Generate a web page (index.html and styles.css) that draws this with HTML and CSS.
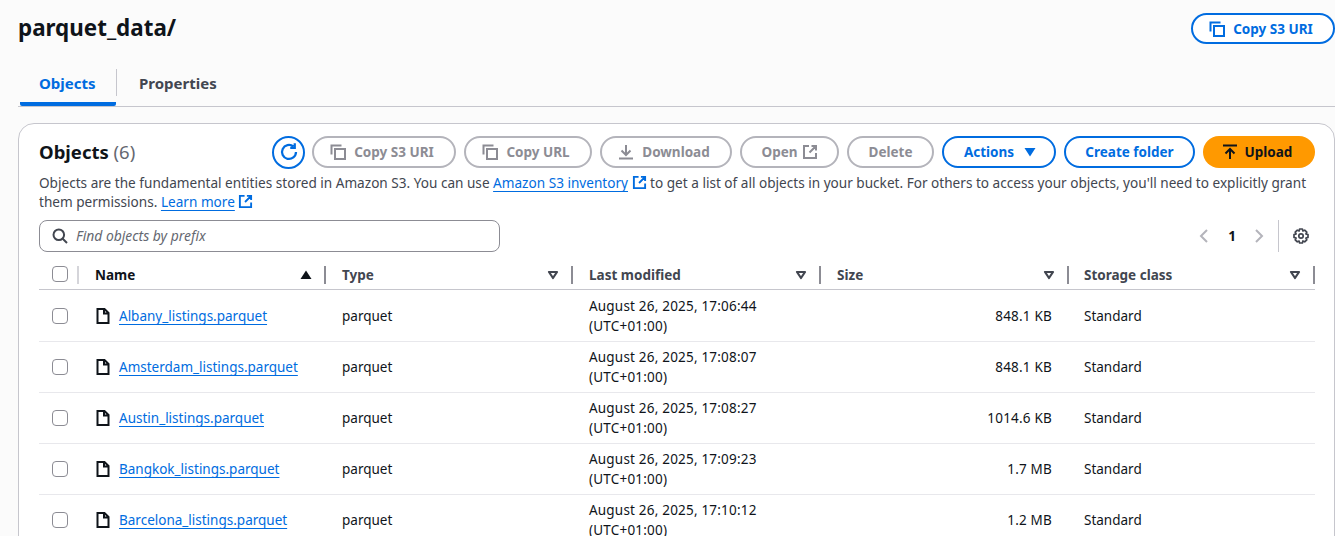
FILE: index.html
```html
<!DOCTYPE html>
<html lang="en">
<head>
    <meta charset="UTF-8">
    <title>parquet_data/ - S3 bucket</title>
    <link rel="stylesheet" href="styles.css">
</head>
<body>
    <svg class="defs" width="0" height="0">
        <symbol id="copy" viewBox="0 0 16 16"><path d="M1.5 10.5V1.5H11.5M5 5H15V15H5Z" fill="none" stroke="currentColor" stroke-width="2"/></symbol>
        <symbol id="external" viewBox="0 0 16 16"><path d="M7 2H2V14H14V9M9.5 2H14V6.5M14 2L7.5 8.5" fill="none" stroke="currentColor" stroke-width="2"/></symbol>
        <symbol id="file" viewBox="0 0 16 16"><path d="M2.5 1H9.5L13.5 5V15H2.5ZM9 1V5.5H13.5" fill="none" stroke="currentColor" stroke-width="2"/></symbol>
        <symbol id="caret" viewBox="0 0 12 10"><path d="M2 2H10L6 8Z" fill="none" stroke="currentColor" stroke-width="2.2" stroke-linejoin="round"/></symbol>
    </svg>

    <header class="page-head">
        <h1>parquet_data/</h1>
        <button class="btn btn-primary-line has-icon"><svg class="icon"><use href="#copy"/></svg>Copy S3 URI</button>
    </header>

    <nav class="tabs">
        <a class="tab active">Objects</a>
        <a class="tab">Properties</a>
    </nav>

    <section class="card">
        <div class="card-head">
            <h2>Objects <span class="count">(6)</span></h2>
            <div class="actions">
                <button class="btn-round">
                    <svg width="20" height="20" viewBox="0 0 16 16"><path d="M13.6 8A5.6 5.6 0 1 1 11.5 3.6M12.6 1V4.6H9" fill="none" stroke="currentColor" stroke-width="1.8"/></svg>
                </button>
                <button class="btn btn-off has-icon w-144"><svg class="icon"><use href="#copy"/></svg>Copy S3 URI</button>
                <button class="btn btn-off has-icon w-128"><svg class="icon"><use href="#copy"/></svg>Copy URL</button>
                <button class="btn btn-off has-icon w-132">
                    <svg class="icon" viewBox="0 0 16 16"><path d="M8 1V10.5M3.5 6.5L8 11L12.5 6.5M1 14.5H15" fill="none" stroke="currentColor" stroke-width="2"/></svg>Download
                </button>
                <button class="btn btn-off w-99 icon-end">Open<svg class="icon"><use href="#external"/></svg></button>
                <button class="btn btn-off w-87">Delete</button>
                <button class="btn btn-primary-line w-114">Actions
                    <svg class="tri" viewBox="0 0 12 10"><path d="M0.5 1H11.5L6 9.5Z" fill="currentColor"/></svg>
                </button>
                <button class="btn btn-primary-line w-131">Create folder</button>
                <button class="btn btn-upload">
                    <svg class="icon" viewBox="0 0 16 16"><path d="M1 1.5H15M8 15V5.5M3.5 9.5L8 5L12.5 9.5" fill="none" stroke="currentColor" stroke-width="2"/></svg>Upload
                </button>
            </div>
        </div>
        <p class="desc">Objects are the fundamental entities stored in Amazon S3. You can use <a href="#">Amazon S3 inventory</a> <svg class="icon-link"><use href="#external"/></svg> to get a list of all objects in your bucket. For others to access your objects, you'll need to explicitly grant<br>them permissions. <a href="#">Learn more</a> <svg class="icon-link"><use href="#external"/></svg></p>

        <div class="tools">
            <div class="search">
                <svg width="16" height="16" viewBox="0 0 16 16"><circle cx="6.8" cy="6.8" r="5.3" fill="none" stroke="currentColor" stroke-width="2"/><path d="M10.5 10.5L15 15" stroke="currentColor" stroke-width="2"/></svg>
                <span>Find objects by prefix</span>
            </div>
            <div class="pager">
                <svg class="chev" viewBox="0 0 10 16"><path d="M8 2L2 8L8 14" fill="none" stroke="currentColor" stroke-width="2"/></svg>
                <b>1</b>
                <svg class="chev" viewBox="0 0 10 16"><path d="M2 2L8 8L2 14" fill="none" stroke="currentColor" stroke-width="2"/></svg>
                <span class="pager-sep"></span>
                <svg class="gear" width="16" height="16" viewBox="0 0 16 16"><path d="M6.6 1H9.4L9.9 3L11.7 2.2L13.8 4.2L12.9 6L15 6.6V9.4L12.9 10L13.8 11.8L11.7 13.8L9.9 13L9.4 15H6.6L6.1 13L4.3 13.8L2.2 11.8L3.1 10L1 9.4V6.6L3.1 6L2.2 4.2L4.3 2.2L6.1 3Z" fill="none" stroke="currentColor" stroke-width="1.7" stroke-linejoin="round"/><circle cx="8" cy="8" r="2.2" fill="none" stroke="currentColor" stroke-width="1.7"/></svg>
            </div>
        </div>

        <div class="row row-head">
            <div class="cell-check"><span class="check"></span></div>
            <div class="th th-name">Name <svg class="sort" viewBox="0 0 12 10"><path d="M6 0.5L11.5 9H0.5Z" fill="currentColor"/></svg></div>
            <div class="th">Type <svg class="sort"><use href="#caret"/></svg></div>
            <div class="th">Last modified <svg class="sort"><use href="#caret"/></svg></div>
            <div class="th">Size <svg class="sort"><use href="#caret"/></svg></div>
            <div class="th th-last">Storage class <svg class="sort"><use href="#caret"/></svg></div>
        </div>

        <div class="row">
            <div class="cell-check"><span class="check"></span></div>
            <div class="td td-name"><svg class="file"><use href="#file"/></svg><a href="#">Albany_listings.parquet</a></div>
            <div class="td">parquet</div>
            <div class="td td-num">August 26, 2025, 17:06:44<br>(UTC+01:00)</div>
            <div class="td td-num td-size">848.1 KB</div>
            <div class="td td-last">Standard</div>
        </div>
        <div class="row">
            <div class="cell-check"><span class="check"></span></div>
            <div class="td td-name"><svg class="file"><use href="#file"/></svg><a href="#">Amsterdam_listings.parquet</a></div>
            <div class="td">parquet</div>
            <div class="td td-num">August 26, 2025, 17:08:07<br>(UTC+01:00)</div>
            <div class="td td-num td-size">848.1 KB</div>
            <div class="td td-last">Standard</div>
        </div>
        <div class="row">
            <div class="cell-check"><span class="check"></span></div>
            <div class="td td-name"><svg class="file"><use href="#file"/></svg><a href="#">Austin_listings.parquet</a></div>
            <div class="td">parquet</div>
            <div class="td td-num">August 26, 2025, 17:08:27<br>(UTC+01:00)</div>
            <div class="td td-num td-size">1014.6 KB</div>
            <div class="td td-last">Standard</div>
        </div>
        <div class="row">
            <div class="cell-check"><span class="check"></span></div>
            <div class="td td-name"><svg class="file"><use href="#file"/></svg><a href="#">Bangkok_listings.parquet</a></div>
            <div class="td">parquet</div>
            <div class="td td-num">August 26, 2025, 17:09:23<br>(UTC+01:00)</div>
            <div class="td td-num td-size">1.7 MB</div>
            <div class="td td-last">Standard</div>
        </div>
        <div class="row">
            <div class="cell-check"><span class="check"></span></div>
            <div class="td td-name"><svg class="file"><use href="#file"/></svg><a href="#">Barcelona_listings.parquet</a></div>
            <div class="td">parquet</div>
            <div class="td td-num">August 26, 2025, 17:10:12<br>(UTC+01:00)</div>
            <div class="td td-num td-size">1.2 MB</div>
            <div class="td td-last">Standard</div>
        </div>
    </section>
</body>
</html>
```

FILE: styles.css
```css
* {
    box-sizing: border-box;
}
html, body {
    height: 536px;
    overflow: hidden;
}
body {
    margin: 0;
    background: #fbfbfb;
    color: #0f141a;
    font-family: "Noto Sans", "Open Sans", sans-serif;
    font-size: 13.5px;
    line-height: 20px;
}
a {
    color: #006ce0;
    text-decoration: underline;
    text-underline-offset: 3px;
}
.defs {
    position: absolute;
}
.page-head {
    display: flex;
    justify-content: space-between;
    padding: 12px 0 0 18px;
    height: 68px;
}
h1 {
    margin: 0;
    font-size: 22.4px;
    line-height: 32px;
    font-weight: 700;
}
.tabs {
    display: flex;
    height: 39px;
    margin-left: 18px;
    border-bottom: 1px solid #c6c6cd;
}
.tab {
    font-weight: 700;
    font-size: 15px;
    color: #424650;
    text-decoration: none;
    padding: 5px 22px 0 23px;
    height: 38px;
}
.tab.active {
    color: #006ce0;
    width: 96px;
    margin-left: 2px;
    border-bottom: 4px solid #006ce0;
    border-radius: 2px;
    padding: 5px 0 0 19px;
    position: relative;
}
.tab.active::after {
    content: "";
    position: absolute;
    right: -1px;
    top: 1px;
    height: 27px;
    border-right: 1px solid #c6c6cd;
}
.card {
    margin: 16px 0 0 18px;
    height: 420px;
    background: #fff;
    border: 1px solid #c6c6cd;
    border-radius: 16px 16px 0 0;
    padding: 12px 19px 0 20px;
}
.card-head {
    display: flex;
    justify-content: space-between;
    align-items: center;
    height: 32px;
}
h2 {
    margin: 0;
    font-size: 18.5px;
    line-height: 30px;
    font-weight: 700;
}
.count {
    font-weight: 400;
    color: #656871;
}
.actions {
    display: flex;
    gap: 8px;
    align-items: center;
}
.btn {
    display: inline-flex;
    align-items: center;
    justify-content: center;
    gap: 7px;
    height: 32px;
    border: 2px solid;
    border-radius: 16px;
    background: transparent;
    font-family: inherit;
    font-size: 13.5px;
    font-weight: 700;
    padding: 0;
    white-space: nowrap;
}
.btn-primary-line {
    color: #006ce0;
    border-color: #006ce0;
    background: #fff;
}
.has-icon {
    gap: 8px;
    padding-right: 4px;
}
.page-head .btn {
    width: 144px;
    height: 31px;
    margin-top: 1px;
}
.btn-off {
    color: #8c8c94;
    border-color: #b4b4bb;
}
.btn-upload {
    width: 112px;
    border: none;
    background: #ff9900;
    color: #0f141a;
    padding-right: 4px;
}
.w-144 { width: 144px; }
.w-128 { width: 128px; }
.w-132 { width: 132px; }
.w-99 { width: 99px; }
.w-87 { width: 87px; }
.w-114 { width: 114px; gap: 10px; padding-left: 2px; }
.w-131 { width: 131px; }
.icon-end { gap: 4px; }
.btn-round {
    width: 33px;
    height: 33px;
    margin-right: -1px;
    border: 2px solid #006ce0;
    border-radius: 50%;
    background: #fff;
    color: #006ce0;
    padding: 0;
    display: flex;
    align-items: center;
    justify-content: center;
}
.icon {
    width: 16px;
    height: 16px;
    flex: none;
}
.tri {
    width: 12px;
    height: 10px;
}
.desc {
    margin: 5px 0 0;
    color: #424650;
    font-size: 13.6px;
    line-height: 19px;
    white-space: nowrap;
}
.icon-link {
    width: 15px;
    height: 15px;
    color: #006ce0;
    vertical-align: -2px;
}
.tools {
    display: flex;
    justify-content: space-between;
    align-items: center;
    margin-top: 9px;
    height: 32px;
}
.search {
    display: flex;
    align-items: center;
    gap: 8px;
    width: 461px;
    height: 32px;
    padding-left: 12px;
    border: 1px solid #8c8c94;
    border-radius: 8px;
    color: #424650;
}
.search span {
    font-style: italic;
    font-size: 13.9px;
    color: #656871;
}
.pager {
    display: flex;
    align-items: center;
    margin-right: 6px;
    color: #0f141a;
}
.chev {
    width: 10px;
    height: 16px;
    color: #b4b4bb;
}
.pager b {
    margin: 0 18px 0 19px;
}
.pager-sep {
    height: 32px;
    border-left: 1px solid #c6c6cd;
    margin: 0 14px;
}
.gear {
    color: #424650;
}
.row {
    display: grid;
    grid-template-columns: 40px 247px 247px 248px 248px 246px;
    height: 51px;
    border-bottom: 1px solid #e8e8ec;
    align-items: center;
}
.row-head {
    height: 32px;
    margin-top: 6px;
    padding-top: 8px;
    border-bottom-color: #c6c6cd;
    align-items: start;
}
.row-head + .row {
    height: 52px;
    padding-top: 1px;
}
.cell-check {
    display: flex;
    justify-content: center;
    padding-left: 2px;
}
.row-head .cell-check {
    position: relative;
    height: 18px;
}
.row-head .cell-check::after {
    content: "";
    position: absolute;
    right: 0;
    top: 0;
    height: 18px;
    border-right: 2px solid #d5d5da;
}
.check {
    width: 16px;
    height: 16px;
    border: 1px solid #8c8c94;
    border-radius: 4px;
    background: #fff;
}
.th {
    display: flex;
    justify-content: space-between;
    align-items: center;
    height: 18px;
    padding: 0 12px 0 16px;
    color: #424650;
    font-weight: 700;
    border-right: 2px solid #8c8c94;
}
.th-name {
    color: #0f141a;
}
.th-last,
.td-last {
    padding-left: 15px;
}
.sort {
    width: 12px;
    height: 10px;
}
.td {
    padding-left: 16px;
}
.td-last {
    padding-left: 15px;
}
.td-num {
    letter-spacing: 0.2px;
}
.td-name {
    display: flex;
    align-items: center;
    gap: 8px;
}
.file {
    width: 16px;
    height: 16px;
    flex: none;
}
.td-size {
    text-align: right;
    padding-right: 17px;
}
```
